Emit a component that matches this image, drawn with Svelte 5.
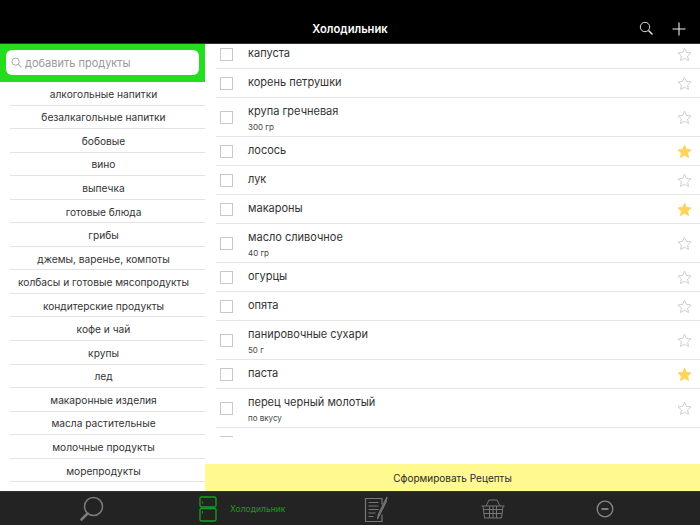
<script>
  const cats = ['алкогольные напитки','безалкагольные напитки','бобовые','вино','выпечка','готовые блюда','грибы','джемы, варенье, компоты','колбасы и готовые мясопродукты','кондитерские продукты','кофе и чай','крупы','лед','макаронные изделия','масла растительные','молочные продукты','морепродукты'];
  const items = [
    {n:'капуста'},{n:'корень петрушки'},{n:'крупа гречневая',s:'300 гр'},{n:'лосось',f:1},{n:'лук'},{n:'макароны',f:1},
    {n:'масло сливочное',s:'40 гр'},{n:'огурцы'},{n:'опята'},{n:'панировочные сухари',s:'50 г'},{n:'паста',f:1},{n:'перец черный молотый',s:'по вкусу'},{n:''}
  ];
  const star = 'M7.5 1.2l1.9 4.2 4.6.5-3.4 3.1.9 4.5-4-2.3-4 2.3.9-4.5L1 5.9l4.6-.5z';
</script>

<div class="app">
  <header class="top">
    <span class="title">Холодильник</span>
    <div class="actions">
      <svg width="15" height="15" viewBox="0 0 15 15"><circle cx="6" cy="6" r="4.7" fill="none" stroke="#ddd" stroke-width="1"/><path d="M9.500 9.500l4 4" stroke="#eee" stroke-width="1.400"/></svg>
      <svg width="14" height="14" viewBox="0 0 14 14"><path d="M7 .5v13M.5 7h13" stroke="#eee" stroke-width="1.100"/></svg>
    </div>
  </header>
  <div class="main">
    <aside class="side">
      <div class="searchbar">
        <div class="search">
          <svg width="11" height="11" viewBox="0 0 11 11"><circle cx="4.600" cy="4.600" r="3.600" fill="none" stroke="#aaa" stroke-width="1"/><path d="M7.300 7.300l3 3" stroke="#aaa" stroke-width="1.100"/></svg>
          <span>добавить продукты</span>
        </div>
      </div>
      <ul class="cats">
        {#each cats as c}<li>{c}</li>{/each}
      </ul>
    </aside>
    <section class="content">
      <div class="listwrap">
        <ul class="items">
          {#each items as it}
            <li class:tall={it.s}>
              <span class="check"></span>
              <div class="label">
                <div class="name">{it.n}</div>
                {#if it.s}<div class="sub">{it.s}</div>{/if}
              </div>
              {#if it.n}
              <svg class="star" width="15" height="15" viewBox="0 0 15 15"><path d={star} fill={it.f ? '#fdd35a' : 'none'} stroke={it.f ? '#fdd35a' : '#c8c8c8'} stroke-width="0.9" stroke-linejoin="round"/></svg>
              {/if}
            </li>
          {/each}
        </ul>
      </div>
      <div class="make">Сформировать Рецепты</div>
    </section>
  </div>
  <nav class="tabs">
    <div class="tab t1">
      <svg width="26" height="26" viewBox="0 0 26 26"><circle cx="14.500" cy="10.500" r="9" fill="none" stroke="#7b7b7b" stroke-width="1.500"/><path d="M8.500 17.500L2.500 23.500" stroke="#7b7b7b" stroke-width="2.600" stroke-linecap="round"/></svg>
    </div>
    <div class="tab t2">
      <svg width="18" height="26" viewBox="0 0 18 26"><rect x="1" y="1" width="16" height="10" rx="1.500" fill="none" stroke="#1f9a1f" stroke-width="1.300"/><rect x="1" y="12.500" width="16" height="12.500" rx="1.500" fill="none" stroke="#1f9a1f" stroke-width="1.300"/><path d="M3.500 5.500v2M3.500 15v2.500" stroke="#1f9a1f"/></svg>
      <span>Холодильник</span>
    </div>
    <div class="tab t3">
      <svg width="24" height="28" viewBox="0 0 24 28"><path d="M18 9.500V3.500H1.500v23H18v-7" fill="none" stroke="#777" stroke-width="1.200"/><path d="M4.500 7.500h10M4.500 11h10M4.500 14.500h10M4.500 18h7M4.500 21.500h5" stroke="#777" stroke-width="1.100"/><path d="M13.500 24l1-5 7-14 1.500-3-1 5-7 14z" fill="none" stroke="#777" stroke-width="1.200"/></svg>
    </div>
    <div class="tab t4">
      <svg width="24" height="20" viewBox="0 0 24 20"><path d="M5 7l3-6h8l3 6" fill="none" stroke="#777" stroke-width="1"/><path d="M.5 7h23M2 7l1.500 12h17L22 7M2.500 10.500h19M3 14.500h18M8.500 7v12M15.500 7v12M12 7v12" fill="none" stroke="#777" stroke-width="1"/></svg>
    </div>
    <div class="tab t5">
      <svg width="18" height="18" viewBox="0 0 18 18"><circle cx="9" cy="9" r="7.800" fill="none" stroke="#8a8a8a" stroke-width="1.300"/><path d="M5.500 9h7" stroke="#8a8a8a" stroke-width="1.800"/></svg>
    </div>
  </nav>
</div>

<style>
  :global(body) { margin: 0; }
  .app { width: 700px; height: 525px; display: flex; flex-direction: column; overflow: hidden; background: #fff; font-family: Inter, "Liberation Sans", sans-serif; color: #222; }
  ul { list-style: none; margin: 0; padding: 0; }

  .top { flex: none; background: #000; border-bottom: 1px solid #333; display: flex; align-items: center; justify-content: center; position: relative; padding-top: 15px; box-sizing: content-box; height: 28px; }
  .title { color: #fff; font-size: 11.2px; font-weight: 600; line-height: 28px; }
  .actions { position: absolute; right: 14px; top: 21px; display: flex; gap: 18px; align-items: center; }

  .main { flex: 1; min-height: 0; display: flex; }
  .side { width: 205px; flex: none; display: flex; flex-direction: column; overflow: hidden; }
  .searchbar { height: 38px; flex: none; background: #25dc1e; padding: 6px 6px 7px; box-sizing: border-box; }
  .search { height: 25px; background: #fff; border-radius: 6px; display: flex; align-items: center; gap: 3px; padding-left: 5px; width: 193px; box-sizing: border-box; font-size: 11px; color: #999; }
  .cats { padding-left: 10px; }
  .cats li { height: 23.56px; box-sizing: border-box; border-bottom: 1px solid #e3e3e3; display: flex; align-items: center; justify-content: center; font-size: 10.2px; color: #333; white-space: nowrap; padding: 1px 8px 0 0; }

  .content { flex: 1; min-width: 0; display: flex; flex-direction: column; }
  .listwrap { height: 393px; overflow: hidden; flex: none; padding-left: 11px; }
  .items { margin-top: -4px; }
  .items li { height: 29px; box-sizing: border-box; border-bottom: 1.5px solid #e6e6e6; display: flex; align-items: center; }
  .items li.tall { height: 39px; }
  .check { width: 13px; height: 13px; box-sizing: border-box; border: 1px solid #c9c9c9; margin-left: 4px; flex: none; }
  .label { margin-left: 15px; flex: 1; margin-top: -2px; }
  .tall .label { margin-top: 3px; }
  .name { font-size: 11px; color: #333; line-height: 14px; }
  .sub { font-size: 8px; color: #444; line-height: 11px; margin-top: 4px; }
  .star { margin-right: 8px; flex: none; }

  .make { margin-top: 27px; height: 27px; background: #fff98f; display: flex; align-items: center; justify-content: center; font-size: 10px; color: #2a2a2a; }

  .tabs { height: 34px; flex: none; background: #232323; border-top: 1px solid #333; box-sizing: border-box; display: flex; align-items: center; }
  .tab { flex: none; display: flex; align-items: center; }
  .t1 { margin-left: 79px; }
  .t2 { margin-left: 94px; gap: 13px; color: #1f9a1f; font-size: 8.500px; }
  .t3 { margin-left: 79px; }
  .t4 { margin-left: 93px; }
  .t5 { margin-left: 91px; }
</style>
